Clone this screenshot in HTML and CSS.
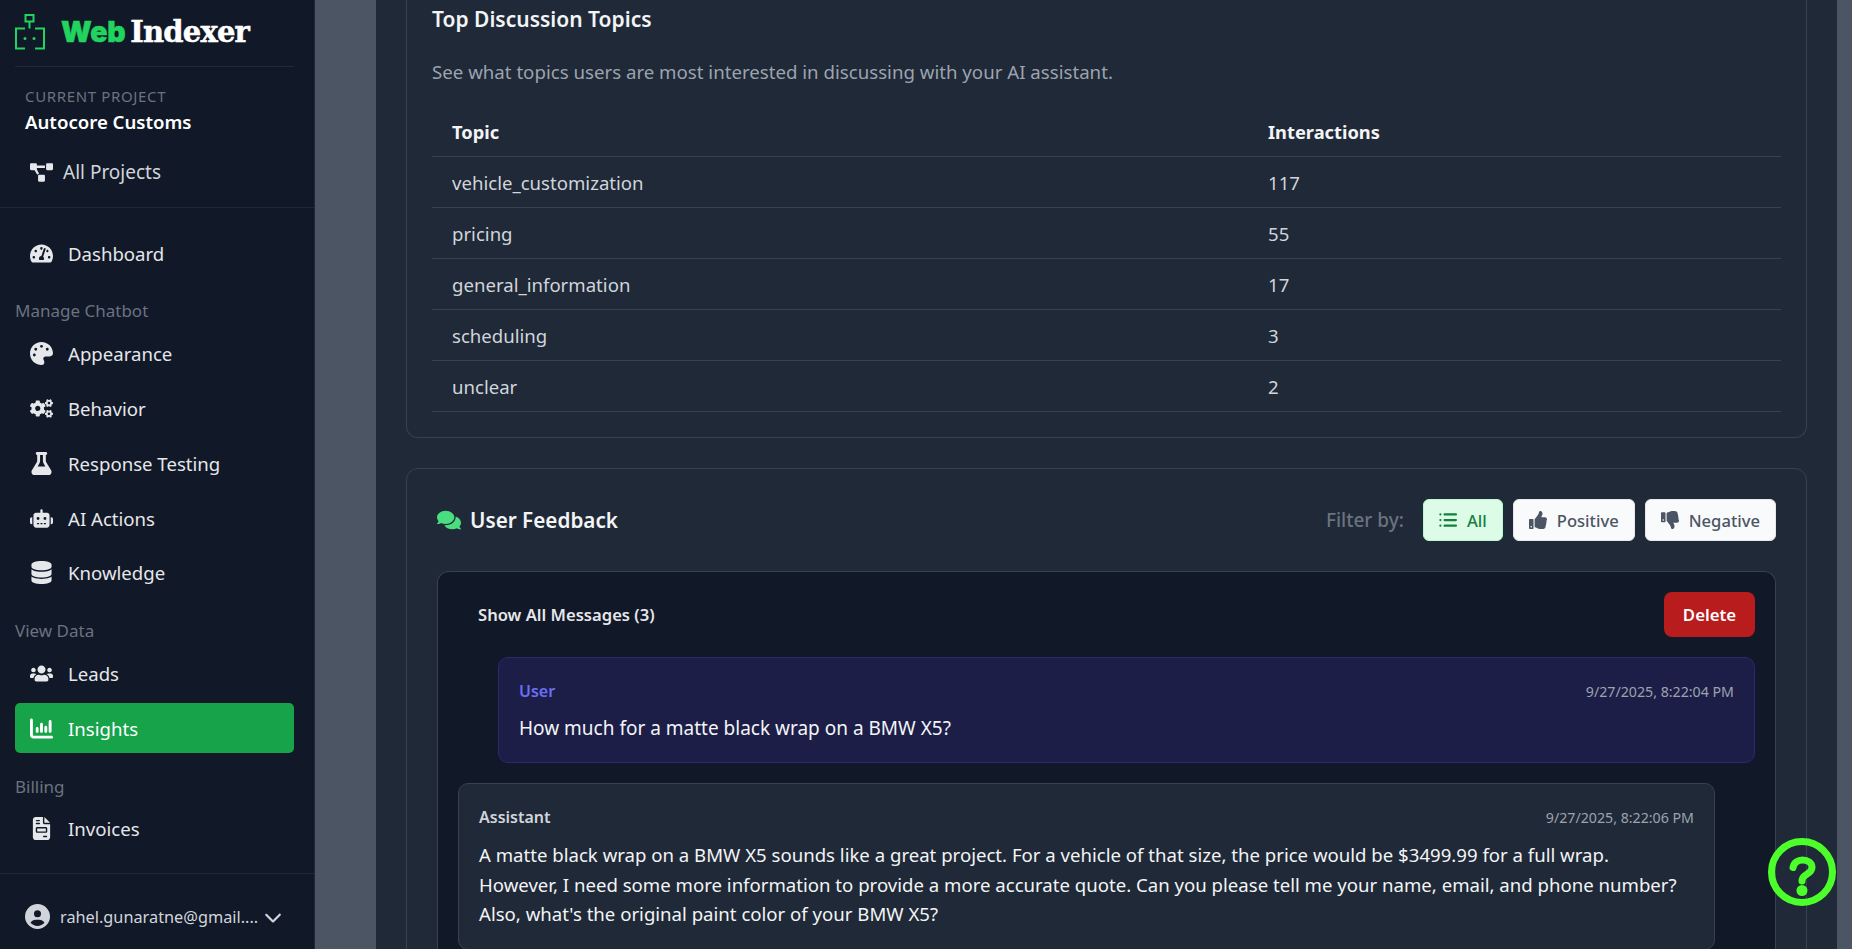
FILE: index.html
```html
<!DOCTYPE html>
<html lang="en">
<head>
<meta charset="utf-8">
<title>Insights - WebIndexer</title>
<link rel="stylesheet" href="styles.css">
</head>
<body>
<div class="app">
<aside class="sidebar">
  <div class="logo">
    <svg class="logo-mark" viewBox="0 0 30 36" fill="none" stroke="#20d45f" stroke-width="2"><rect x="10.500" y="1" width="8" height="6.500"/><path d="M14.500 7.500v7M10 14.500H1v20h9M20 14.500h9v20h-9"/><circle cx="10" cy="24.500" r="1.500" fill="#20d45f" stroke="none"/><circle cx="19" cy="24.500" r="1.500" fill="#20d45f" stroke="none"/></svg>
    <span class="logo-web">Web</span><span class="logo-indexer">Indexer</span>
  </div>
  <div class="project">
    <div class="project-label">CURRENT PROJECT</div>
    <div class="project-name">Autocore Customs</div>
    <a class="all-projects"><svg class="ico" viewBox="0 0 640 512"><path d="M384 320H256c-17.67 0-32 14.33-32 32v128c0 17.67 14.33 32 32 32h128c17.67 0 32-14.33 32-32V352c0-17.67-14.33-32-32-32zM192 32c0-17.67-14.33-32-32-32H32C14.33 0 0 14.33 0 32v128c0 17.67 14.33 32 32 32h95.72l73.16 128.04C211.98 300.98 232.4 288 256 288h.28L192 175.51V128h224V64H192V32zM608 0H480c-17.67 0-32 14.33-32 32v128c0 17.67 14.33 32 32 32h128c17.67 0 32-14.33 32-32V32c0-17.67-14.33-32-32-32z"/></svg>All Projects</a>
  </div>
  <nav class="nav">
    <a class="nav-item"><svg class="ico" viewBox="0 0 576 512"><path d="M288 32C128.94 32 0 160.94 0 320c0 52.8 14.25 102.26 39.06 144.8 5.61 9.62 16.3 15.2 27.44 15.2h443c11.14 0 21.83-5.58 27.44-15.2C561.75 422.26 576 372.8 576 320c0-159.06-128.94-288-288-288zm0 64c14.71 0 26.58 10.13 30.32 23.65-1.11 2.26-2.64 4.23-3.45 6.67l-9.22 27.67c-5.13 3.49-10.97 6.01-17.64 6.01-17.67 0-32-14.33-32-32S270.33 96 288 96zM96 384c-17.67 0-32-14.33-32-32s14.33-32 32-32 32 14.33 32 32-14.33 32-32 32zm48-160c-17.67 0-32-14.33-32-32s14.33-32 32-32 32 14.33 32 32-14.33 32-32 32zm246.77-72.41l-61.33 184C343.13 347.33 352 364.54 352 384c0 11.72-3.38 22.55-8.88 32H232.88c-5.5-9.45-8.88-20.28-8.88-32 0-33.94 26.5-61.43 59.9-63.59l61.34-184.01c4.17-12.56 17.73-19.45 30.36-15.17 12.57 4.19 19.35 17.79 15.17 30.36zm14.66 57.2l15.52-46.55c3.47-1.29 7.13-2.23 11.05-2.23 17.67 0 32 14.33 32 32s-14.33 32-32 32c-11.38-.01-20.89-6.28-26.57-15.22zM480 384c-17.67 0-32-14.33-32-32s14.33-32 32-32 32 14.33 32 32-14.33 32-32 32z"/></svg>Dashboard</a>
    <div class="nav-group">Manage Chatbot</div>
    <a class="nav-item"><svg class="ico" viewBox="0 0 512 512"><path d="M512 256c0 .9 0 1.8 0 2.7c-.4 36.5-33.6 61.3-70.1 61.3H344c-26.5 0-48 21.5-48 48c0 3.4 .4 6.7 1 9.9c2.1 10.2 6.5 20 10.8 29.9c6.1 13.8 12.1 27.5 12.1 42c0 31.8-21.6 60.7-53.4 62c-3.5 .1-7 .2-10.6 .2C114.6 512 0 397.4 0 256S114.6 0 256 0S512 114.6 512 256zM128 288a32 32 0 1 0 -64 0 32 32 0 1 0 64 0zm0-96a32 32 0 1 0 0-64 32 32 0 1 0 0 64zM288 96a32 32 0 1 0 -64 0 32 32 0 1 0 64 0zm96 96a32 32 0 1 0 0-64 32 32 0 1 0 0 64z"/></svg>Appearance</a>
    <a class="nav-item"><svg class="ico" viewBox="0 0 640 512"><path d="M512.1 191l-8.2 14.3c-3 5.3-9.4 7.5-15.1 5.4-11.8-4.4-22.6-10.7-32.1-18.6-4.6-3.8-5.8-10.5-2.8-15.7l8.2-14.3c-6.9-8-12.3-17.3-15.9-27.4h-16.5c-6 0-11.2-4.3-12.2-10.3-2-12-2.1-24.6 0-37.1 1-6 6.2-10.4 12.2-10.4h16.5c3.6-10.1 9-19.4 15.9-27.4l-8.2-14.3c-3-5.2-1.9-11.9 2.8-15.7 9.5-7.9 20.4-14.2 32.1-18.6 5.7-2.1 12.1.1 15.1 5.4l8.2 14.3c10.5-1.9 21.2-1.9 31.7 0L552 6.3c3-5.3 9.4-7.5 15.1-5.4 11.8 4.4 22.6 10.7 32.1 18.6 4.6 3.8 5.8 10.5 2.8 15.7l-8.2 14.3c6.9 8 12.3 17.3 15.9 27.4h16.5c6 0 11.2 4.3 12.2 10.3 2 12 2.1 24.6 0 37.1-1 6-6.2 10.4-12.2 10.4h-16.5c-3.6 10.1-9 19.4-15.9 27.4l8.2 14.3c3 5.2 1.9 11.9-2.8 15.7-9.5 7.9-20.4 14.2-32.1 18.6-5.7 2.1-12.1-.1-15.1-5.4l-8.2-14.3c-10.4 1.9-21.2 1.9-31.7 0zm-10.5-58.8c38.5 29.6 82.4-14.3 52.8-52.8-38.5-29.7-82.4 14.3-52.8 52.8zM386.3 286.1l33.7 16.8c10.1 5.8 14.5 18.1 10.5 29.1-8.9 24.2-26.4 46.4-42.6 65.8-7.4 8.9-20.2 11.1-30.3 5.3l-29.1-16.8c-16 13.7-34.6 24.6-54.9 31.7v33.6c0 11.6-8.3 21.6-19.7 23.6-24.6 4.2-50.4 4.4-75.9 0-11.5-2-20-11.9-20-23.6V418c-20.3-7.2-38.9-18-54.9-31.7L74 403c-10 5.8-22.9 3.6-30.3-5.3-16.2-19.4-33.3-41.6-42.2-65.7-4-10.9.4-23.2 10.5-29.1l33.3-16.8c-3.9-20.9-3.9-42.4 0-63.4L12 205.8c-10.1-5.8-14.6-18.1-10.5-29 8.9-24.2 26-46.4 42.2-65.8 7.4-8.9 20.2-11.1 30.3-5.3l29.1 16.8c16-13.7 34.6-24.6 54.9-31.7V57.1c0-11.5 8.2-21.5 19.6-23.5 24.6-4.2 50.5-4.4 76-.1 11.5 2 20 11.9 20 23.6v33.6c20.3 7.2 38.9 18 54.9 31.7l29.1-16.8c10-5.8 22.9-3.6 30.3 5.3 16.2 19.4 33.2 41.6 42.1 65.8 4 10.9.1 23.2-10 29.1l-33.7 16.8c3.9 21 3.9 42.5 0 63.5zm-117.6 21.1c59.2-77-28.7-164.9-105.7-105.7-59.2 77 28.7 164.9 105.7 105.7zm243.4 182.7l-8.2 14.3c-3 5.3-9.4 7.5-15.1 5.4-11.8-4.4-22.6-10.7-32.1-18.6-4.6-3.8-5.8-10.5-2.8-15.7l8.2-14.3c-6.9-8-12.3-17.3-15.9-27.4h-16.5c-6 0-11.2-4.3-12.2-10.3-2-12-2.1-24.6 0-37.1 1-6 6.2-10.4 12.2-10.4h16.5c3.6-10.1 9-19.4 15.9-27.4l-8.2-14.3c-3-5.2-1.9-11.9 2.8-15.7 9.5-7.9 20.4-14.2 32.1-18.6 5.7-2.1 12.1.1 15.1 5.4l8.2 14.3c10.5-1.9 21.2-1.9 31.7 0l8.2-14.3c3-5.3 9.4-7.5 15.1-5.4 11.8 4.4 22.6 10.7 32.1 18.6 4.6 3.8 5.8 10.5 2.8 15.7l-8.2 14.3c6.9 8 12.3 17.3 15.9 27.4h16.5c6 0 11.2 4.3 12.2 10.3 2 12 2.1 24.6 0 37.1-1 6-6.2 10.4-12.2 10.4h-16.5c-3.6 10.1-9 19.4-15.9 27.4l8.2 14.3c3 5.2 1.9 11.9-2.8 15.7-9.5 7.9-20.4 14.2-32.1 18.6-5.7 2.1-12.1-.1-15.1-5.4l-8.2-14.3c-10.4 1.9-21.2 1.9-31.7 0zM501.6 431c38.5 29.6 82.4-14.3 52.8-52.8-38.5-29.6-82.4 14.3-52.8 52.8z"/></svg>Behavior</a>
    <a class="nav-item"><svg class="ico" viewBox="0 0 448 512"><path d="M288 0H160 128C110.3 0 96 14.3 96 32s14.3 32 32 32V196.8c0 11.8-3.3 23.5-9.5 33.5L10.3 406.2C3.6 417.2 0 429.7 0 442.6C0 480.9 31.1 512 69.4 512H378.6c38.3 0 69.4-31.1 69.4-69.4c0-12.8-3.6-25.4-10.3-36.4L329.5 230.4c-6.2-10.1-9.5-21.7-9.5-33.5V64c17.7 0 32-14.3 32-32s-14.3-32-32-32H288zM192 196.8V64h64V196.8c0 23.7 6.6 46.9 19 67.1L309.5 320h-171L173 263.9c12.4-20.2 19-43.4 19-67.1z"/></svg>Response Testing</a>
    <a class="nav-item"><svg class="ico" viewBox="0 0 640 512"><path d="M320 0c17.7 0 32 14.3 32 32V96H472c39.8 0 72 32.2 72 72V440c0 39.8-32.2 72-72 72H168c-39.8 0-72-32.2-72-72V168c0-39.8 32.2-72 72-72H288V32c0-17.7 14.3-32 32-32zM208 384c-8.8 0-16 7.2-16 16s7.2 16 16 16h32c8.8 0 16-7.2 16-16s-7.2-16-16-16H208zm96 0c-8.8 0-16 7.2-16 16s7.2 16 16 16h32c8.8 0 16-7.2 16-16s-7.2-16-16-16H304zm96 0c-8.8 0-16 7.2-16 16s7.2 16 16 16h32c8.8 0 16-7.2 16-16s-7.2-16-16-16H400zM264 256a40 40 0 1 0 -80 0 40 40 0 1 0 80 0zm152 40a40 40 0 1 0 0-80 40 40 0 1 0 0 80zM48 224H64V416H48c-26.5 0-48-21.5-48-48V272c0-26.5 21.5-48 48-48zm544 0c26.5 0 48 21.5 48 48v96c0 26.5-21.5 48-48 48H576V224h16z"/></svg>AI Actions</a>
    <a class="nav-item"><svg class="ico" viewBox="0 0 448 512"><path d="M448 80v48c0 44.2-100.3 80-224 80S0 172.2 0 128V80C0 35.8 100.3 0 224 0S448 35.8 448 80zM393.2 214.7c20.8-7.4 39.9-16.9 54.8-28.6V288c0 44.2-100.3 80-224 80S0 332.2 0 288V186.1c14.9 11.8 34 21.2 54.8 28.6C99.7 230.7 159.5 240 224 240s124.3-9.3 169.2-25.3zM0 346.1c14.9 11.8 34 21.2 54.8 28.6C99.7 390.7 159.5 400 224 400s124.3-9.3 169.2-25.3c20.8-7.4 39.9-16.9 54.8-28.6V432c0 44.2-100.3 80-224 80S0 476.2 0 432V346.1z"/></svg>Knowledge</a>
    <div class="nav-group">View Data</div>
    <a class="nav-item"><svg class="ico" viewBox="0 0 640 512"><path d="M96 224c35.3 0 64-28.7 64-64s-28.7-64-64-64-64 28.7-64 64 28.7 64 64 64zm448 0c35.3 0 64-28.7 64-64s-28.7-64-64-64-64 28.7-64 64 28.7 64 64 64zm32 32h-64c-17.6 0-33.5 7.1-45.1 18.6 40.3 22.1 68.9 62 75.1 109.4h66c17.7 0 32-14.3 32-32v-32c0-35.3-28.7-64-64-64zm-256 0c61.9 0 112-50.1 112-112S381.9 32 320 32 208 82.1 208 144s50.1 112 112 112zm76.8 32h-8.3c-20.8 10-43.9 16-68.5 16s-47.6-6-68.5-16h-8.3C179.6 288 128 339.6 128 403.2V432c0 26.5 21.5 48 48 48h288c26.5 0 48-21.5 48-48v-28.8c0-63.6-51.6-115.2-115.2-115.2zm-223.7-13.4C161.5 263.1 145.6 256 128 256H64c-35.3 0-64 28.7-64 64v32c0 17.7 14.3 32 32 32h65.9c6.3-47.4 34.9-87.3 75.2-109.4z"/></svg>Leads</a>
    <a class="nav-item active"><svg class="ico" viewBox="0 0 512 512"><path d="M32 32c17.7 0 32 14.3 32 32V400c0 8.8 7.2 16 16 16H480c17.7 0 32 14.3 32 32s-14.3 32-32 32H80c-44.2 0-80-35.8-80-80V64C0 46.3 14.3 32 32 32zM160 224c17.7 0 32 14.3 32 32v64c0 17.7-14.3 32-32 32s-32-14.3-32-32V256c0-17.7 14.3-32 32-32zm128-64V320c0 17.7-14.3 32-32 32s-32-14.3-32-32V160c0-17.7 14.3-32 32-32s32 14.3 32 32zm64 32c17.7 0 32 14.3 32 32v96c0 17.7-14.3 32-32 32s-32-14.3-32-32V224c0-17.7 14.3-32 32-32zM480 96V320c0 17.7-14.3 32-32 32s-32-14.3-32-32V96c0-17.7 14.3-32 32-32s32 14.3 32 32z"/></svg>Insights</a>
    <div class="nav-group">Billing</div>
    <a class="nav-item"><svg class="ico" viewBox="0 0 384 512"><path d="M64 0C28.7 0 0 28.7 0 64V448c0 35.3 28.7 64 64 64H320c35.3 0 64-28.7 64-64V160H256c-17.7 0-32-14.3-32-32V0H64zM256 0V128H384L256 0zM80 64h64c8.8 0 16 7.2 16 16s-7.2 16-16 16H80c-8.8 0-16-7.2-16-16s7.2-16 16-16zm0 64h64c8.8 0 16 7.2 16 16s-7.2 16-16 16H80c-8.8 0-16-7.2-16-16s7.2-16 16-16zm16 96H288c17.7 0 32 14.3 32 32v64c0 17.7-14.3 32-32 32H96c-17.7 0-32-14.3-32-32V256c0-17.7 14.3-32 32-32zm0 32v64H288V256H96zM240 416h64c8.8 0 16 7.2 16 16s-7.2 16-16 16H240c-8.8 0-16-7.2-16-16s7.2-16 16-16z"/></svg>Invoices</a>
  </nav>
  <div class="account">
    <svg class="account-ico" viewBox="0 0 512 512"><path d="M399 384.2C376.9 345.8 335.4 320 288 320H224c-47.4 0-88.9 25.8-111 64.2c35.2 39.2 86.2 63.8 143 63.8s107.8-24.7 143-63.8zM0 256a256 256 0 1 1 512 0A256 256 0 1 1 0 256zm256 16a72 72 0 1 0 0-144 72 72 0 1 0 0 144z"/></svg>
    <span class="account-mail">rahel.gunaratne@gmail....</span>
    <svg class="account-chev" viewBox="0 0 512 512"><path d="M233.4 406.6c12.5 12.5 32.8 12.5 45.3 0l192-192c12.5-12.5 12.5-32.8 0-45.3s-32.8-12.5-45.3 0L256 338.7 86.6 169.4c-12.5-12.5-32.8-12.5-45.3 0s-12.5 32.8 0 45.3l192 192z"/></svg>
  </div>
</aside>
<main class="main">
  <div class="panel">
    <section class="card card-topics">
      <h2 class="card-title">Top Discussion Topics</h2>
      <p class="card-desc">See what topics users are most interested in discussing with your AI assistant.</p>
      <table class="table">
        <thead><tr><th class="col-topic">Topic</th><th>Interactions</th></tr></thead>
        <tbody>
          <tr><td>vehicle_customization</td><td>117</td></tr>
          <tr><td>pricing</td><td>55</td></tr>
          <tr><td>general_information</td><td>17</td></tr>
          <tr><td>scheduling</td><td>3</td></tr>
          <tr><td>unclear</td><td>2</td></tr>
        </tbody>
      </table>
    </section>
    <section class="card card-feedback">
      <header class="fb-head">
        <h2 class="fb-title"><svg class="fb-ico" viewBox="0 0 576 512"><path d="M416 192c0-88.4-93.1-160-208-160S0 103.6 0 192c0 34.3 14.1 65.9 38 92-13.4 30.2-35.5 54.2-35.8 54.5-2.2 2.3-2.8 5.7-1.5 8.7S4.8 352 8 352c36.6 0 66.9-12.3 88.7-25 32.2 15.7 70.3 25 111.3 25 114.9 0 208-71.6 208-160zm122 220c23.9-26 38-57.7 38-92 0-66.9-53.5-124.2-129.3-148.1.9 6.6 1.3 13.3 1.3 20.1 0 105.9-107.7 192-240 192-10.8 0-21.3-.8-31.7-1.9C207.8 439.6 281.8 480 368 480c41 0 79.1-9.2 111.3-25 21.8 12.7 52.1 25 88.7 25 3.2 0 6.1-1.9 7.3-4.8 1.3-2.9.7-6.3-1.5-8.7-.3-.3-22.4-24.2-35.8-54.5z"/></svg>User Feedback</h2>
        <div class="filters">
          <span class="filter-label">Filter by:</span>
          <button class="filter filter-on"><svg class="filter-ico" viewBox="0 0 512 512"><path d="M40 64a32 32 0 1 0 0 64 32 32 0 1 0 0-64zm120 0c-18 0-32 14-32 32s14 32 32 32h320c18 0 32-14 32-32s-14-32-32-32H160zM40 224a32 32 0 1 0 0 64 32 32 0 1 0 0-64zm120 0c-18 0-32 14-32 32s14 32 32 32h320c18 0 32-14 32-32s-14-32-32-32H160zM40 384a32 32 0 1 0 0 64 32 32 0 1 0 0-64zm120 0c-18 0-32 14-32 32s14 32 32 32h320c18 0 32-14 32-32s-14-32-32-32H160z"/></svg>All</button>
          <button class="filter"><svg class="filter-ico" viewBox="0 0 512 512"><path d="M104 224H24c-13.255 0-24 10.745-24 24v240c0 13.255 10.745 24 24 24h80c13.255 0 24-10.745 24-24V248c0-13.255-10.745-24-24-24zM64 472c-13.255 0-24-10.745-24-24s10.745-24 24-24 24 10.745 24 24-10.745 24-24 24zM384 81.452c0 42.416-25.97 66.208-33.277 94.548h101.723c33.397 0 59.397 27.746 59.553 58.098.084 17.938-7.546 37.249-19.439 49.197l-.11.11c9.836 23.337 8.237 56.037-9.308 79.469 8.681 25.895-.069 57.704-16.382 74.757 4.298 17.598 2.244 32.575-6.148 44.632C440.202 511.587 389.616 512 346.839 512l-2.845-.001c-48.287-.017-87.806-17.598-119.56-31.725-15.957-7.099-36.821-15.887-52.651-16.178-6.54-.12-11.783-5.457-11.783-11.998v-213.77c0-3.2 1.282-6.271 3.558-8.521 39.614-39.144 56.648-80.587 89.117-113.111 14.804-14.832 20.188-37.236 25.393-58.902C282.515 39.293 291.817 0 312 0c24 0 72 8 72 81.452z"/></svg>Positive</button>
          <button class="filter"><svg class="filter-ico" viewBox="0 0 512 512"><path d="M0 56v240c0 13.255 10.745 24 24 24h80c13.255 0 24-10.745 24-24V56c0-13.255-10.745-24-24-24H24C10.745 32 0 42.745 0 56zm40 200c0-13.255 10.745-24 24-24s24 10.745 24 24-10.745 24-24 24-24-10.745-24-24zm272 256c-20.183 0-29.485-39.293-33.931-57.795-5.206-21.666-10.589-44.07-25.393-58.902-32.469-32.524-49.503-73.967-89.117-113.111a11.98 11.98 0 0 1-3.558-8.521V59.901c0-6.541 5.243-11.878 11.783-11.998 15.831-.29 36.694-9.079 52.651-16.178C256.189 17.598 295.709.017 343.995 0h2.844c42.777 0 93.363.413 113.774 29.737 8.392 12.057 10.446 27.034 6.148 44.632 16.312 17.053 25.063 48.863 16.382 74.757 17.544 23.432 19.143 56.132 9.308 79.469l.11.11c11.893 11.949 19.523 31.259 19.439 49.197-.156 30.352-26.157 58.098-59.553 58.098H350.723C358.03 364.34 384 388.132 384 430.548 384 504 336 512 312 512z"/></svg>Negative</button>
        </div>
      </header>
      <div class="thread">
        <div class="thread-head">
          <span class="thread-toggle">Show All Messages (3)</span>
          <button class="delete">Delete</button>
        </div>
        <article class="msg msg-user">
          <div class="msg-head"><span class="msg-who who-user">User</span><time class="msg-time">9/27/2025, 8:22:04 PM</time></div>
          <p class="msg-text">How much for a matte black wrap on a BMW X5?</p>
        </article>
        <article class="msg msg-bot">
          <div class="msg-head"><span class="msg-who who-bot">Assistant</span><time class="msg-time">9/27/2025, 8:22:06 PM</time></div>
          <p class="msg-text">A matte black wrap on a BMW X5 sounds like a great project. For a vehicle of that size, the price would be $3499.99 for a full wrap.<br>However, I need some more information to provide a more accurate quote. Can you please tell me your name, email, and phone number?<br>Also, what's the original paint color of your BMW X5?</p>
        </article>
      </div>
    </section>
  </div>
</main>
</div>
<button class="help" aria-label="Help"><svg class="help-ico" viewBox="0 0 68 68" fill="none" stroke="#4cff2a"><circle cx="34" cy="34" r="30.500" stroke-width="7"/><path d="M25 29.500C26 24.500 30 22 34.500 22C40 22 44 25 44 29.500C44 34 39.500 35.500 37 37.500C35 39 34 40 34 43" stroke-width="7" stroke-linecap="round"/><circle cx="34" cy="52.500" r="5.500" fill="#4cff2a" stroke="none"/></svg></button>
</body>
</html>
```
FILE: styles.css
```css
* { box-sizing: border-box; }
html, body { margin: 0; height: 100%; overflow: hidden; }
body { background: #4b5563; color: #f3f4f6; font-family: "Noto Sans", "Open Sans", sans-serif; font-size: 16px; }
h2, p { margin: 0; }
.app { display: flex; height: 949px; }

.sidebar { width: 315px; flex: none; background: #111827; border-right: 1px solid #1f2937; display: flex; flex-direction: column; }
.logo { height: 67px; margin: 0 20px 0 15px; border-bottom: 1px solid #1f2937; display: flex; align-items: center; padding-bottom: 2px; }
.logo-mark { width: 30px; height: 36px; margin-right: 16px; flex: none; }
.logo-web { color: #20d45f; font: 900 28.500px/1 Inter, sans-serif; letter-spacing: -.3px; -webkit-text-stroke: .5px #20d45f; }
.logo-indexer { color: #fff; font: 700 29px/1 "DejaVu Serif", serif; letter-spacing: -.8px; margin-left: 5px; -webkit-text-stroke: .5px #fff; }
.project { padding: 19px 25px 0; height: 141px; border-bottom: 1px solid #1f2937; }
.project-label { color: #6b7280; font-size: 15px; line-height: 20px; letter-spacing: .65px; }
.project-name { color: #fff; font-size: 18.600px; font-weight: 600; line-height: 26px; margin-top: 3px; }
.all-projects { display: flex; align-items: center; color: #d1d5db; font-size: 19px; line-height: 26px; margin: 24px 0 0 5px; }
.all-projects .ico { margin-right: 10px; }
.ico { width: 23px; height: 23px; fill: #e5e7eb; flex: none; }
.nav { flex: 1; padding: 20px 20px 0 15px; display: flex; flex-direction: column; }
.nav-item { height: 50px; display: flex; align-items: center; padding-left: 15px; color: #e5e7eb; font-size: 18.600px; border-radius: 5px; margin-bottom: 4.900px; flex: none; }
.nav-item .ico { margin-right: 15px; }
.nav-item.active { background: #16a34a; color: #fff; }
.nav-item.active .ico { fill: #fff; }
.nav-group { color: #6b7280; font-size: 17px; line-height: 24px; margin: 16.500px 0 5px; }
.account { height: 76px; border-top: 1px solid #1f2937; display: flex; align-items: center; padding: 10px 32px 0 25px; flex: none; }
.account-ico { width: 25px; height: 25px; fill: #d1d5db; flex: none; margin-right: 10px; }
.account-mail { color: #d1d5db; font-size: 16.300px; white-space: nowrap; flex: 1; }
.account-chev { width: 18px; height: 18px; fill: #d1d5db; flex: none; }

.main { flex: 1; min-width: 0; padding: 0 15px 0 61px; }
.panel { background: #1f2937; height: 100%; padding: 0 30px; overflow: hidden; }
.card { border: 1px solid #374151; border-radius: 12px; background: #1f2937; }
.card-topics { border-top: 0; border-top-left-radius: 0; border-top-right-radius: 0; padding: 0 25px; height: 438px; }
.card-title { color: #f3f4f6; font-size: 21px; font-weight: 600; line-height: 38px; }
.card-desc { color: #9ca3af; font-size: 18.660px; line-height: 24px; margin-top: 22px; white-space: nowrap; }
.table { width: 100%; border-collapse: collapse; margin-top: 21px; }
.table th, .table td { text-align: left; padding: 2px 20px 0; height: 51px; border-bottom: 1px solid #374151; font-size: 18.600px; }
.table th { color: #f3f4f6; font-weight: 700; font-size: 18.300px; }
.table td { color: #d1d5db; }
.col-topic { width: 816px; }

.card-feedback { margin-top: 30px; height: 520px; padding: 0 30px; }
.fb-head { height: 102px; display: flex; align-items: center; justify-content: space-between; }
.fb-title { display: flex; align-items: center; color: #f3f4f6; font-size: 20.700px; font-weight: 600; }
.fb-ico { width: 24px; height: 24px; fill: #4ade80; margin-right: 9px; }
.filters { display: flex; align-items: center; gap: 10px; }
.filter-label { color: #6b7280; font-size: 19px; font-weight: 500; margin-right: 9px; }
.filter { height: 42px; display: flex; align-items: center; padding: 0 15px; border: 1px solid #e5e7eb; border-radius: 6px; background: #f9fafb; color: #4b5563; font: 500 16.600px "Noto Sans", sans-serif; }
.filter-ico { width: 18px; height: 18px; fill: #4b5563; margin-right: 10px; }
.filter-on { background: #dcfce7; border-color: #bbf7d0; color: #15803d; }
.filter-on .filter-ico { fill: #15803d; }

.thread { background: #111827; border: 1px solid #374151; border-bottom: 0; border-radius: 12px 12px 0 0; padding: 20px; height: 400px; overflow: hidden; }
.thread-head { height: 65px; display: flex; align-items: flex-start; justify-content: space-between; padding-left: 20px; }
.thread-toggle { color: #e5e7eb; font-size: 16.600px; font-weight: 600; line-height: 45px; }
.delete { width: 91px; height: 45px; border: 0; border-radius: 8px; background: #b91c1c; color: #fff; font: 600 16.800px "Noto Sans", sans-serif; }
.msg { border-radius: 10px; padding: 21px 20px 20px; border: 1px solid; }
.msg-user { margin-left: 40px; background: #1c1e48; border-color: #2a2a72; height: 106px; }
.msg-bot { margin: 20px 40px 0 0; background: #1f2937; border-color: #374151; }
.msg-head { display: flex; justify-content: space-between; align-items: center; height: 24px; }
.msg-who { font-size: 16px; font-weight: 600; }
.who-user { color: #6a6ff4; }
.who-bot { color: #d1d5db; }
.msg-time { color: #9ca3af; font-size: 14.200px; }
.msg-text { color: #f3f4f6; font-size: 19px; line-height: 29.500px; margin-top: 11px; }
.msg-bot .msg-text { font-size: 18.600px; }

.help { position: fixed; left: 1768px; top: 838px; width: 68px; height: 68px; padding: 0; background: transparent; border: 0; }
.help-ico { display: block; width: 68px; height: 68px; }
```
